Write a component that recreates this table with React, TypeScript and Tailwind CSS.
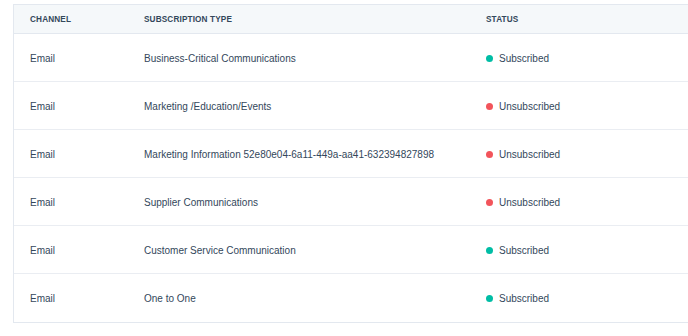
const rows = [
  { channel: 'Email', type: 'Business-Critical Communications', subscribed: true },
  { channel: 'Email', type: 'Marketing /Education/Events', subscribed: false },
  { channel: 'Email', type: 'Marketing Information 52e80e04-6a11-449a-aa41-632394827898', subscribed: false },
  { channel: 'Email', type: 'Supplier Communications', subscribed: false },
  { channel: 'Email', type: 'Customer Service Communication', subscribed: true },
  { channel: 'Email', type: 'One to One', subscribed: true },
]

function Status({ subscribed }: { subscribed: boolean }) {
  return (
    <div className="flex items-center gap-[6px]">
      <span className={subscribed ? 'h-[7px] w-[7px] rounded-full bg-[#00bda5]' : 'h-[7px] w-[7px] rounded-full bg-[#f2545b]'} />
      <span>{subscribed ? 'Subscribed' : 'Unsubscribed'}</span>
    </div>
  )
}

export default function App() {
  return (
    <div className="w-[688px] h-[336px] overflow-hidden bg-white pl-[13px] pt-[4px] font-['Liberation_Sans',Arial,sans-serif] text-[#33475b]">
      <div className="w-[720px] border border-[#e3e8ef]">
        <div className="grid grid-cols-[114px_342px_1fr] h-[29px] pt-[3px] items-center bg-[#f5f8fa] border-b border-[#e3e8ef] text-[8.2px] font-bold tracking-[0.15px] text-[#33475b]">
          <div className="pl-4">CHANNEL</div>
          <div className="pl-4">SUBSCRIPTION TYPE</div>
          <div className="pl-4">STATUS</div>
        </div>
        {rows.map((r, i) => (
          <div
            key={i}
            className={
              i < rows.length - 1
                ? 'grid grid-cols-[114px_342px_1fr] h-[48px] items-center border-b border-[#eaedf2] text-[10px] pt-[1px]'
                : 'grid grid-cols-[114px_342px_1fr] h-[48px] items-center text-[10px] pt-[1px]'
            }
          >
            <div className="pl-4">{r.channel}</div>
            <div className="pl-4">{r.type}</div>
            <div className="pl-4">
              <Status subscribed={r.subscribed} />
            </div>
          </div>
        ))}
      </div>
    </div>
  )
}
